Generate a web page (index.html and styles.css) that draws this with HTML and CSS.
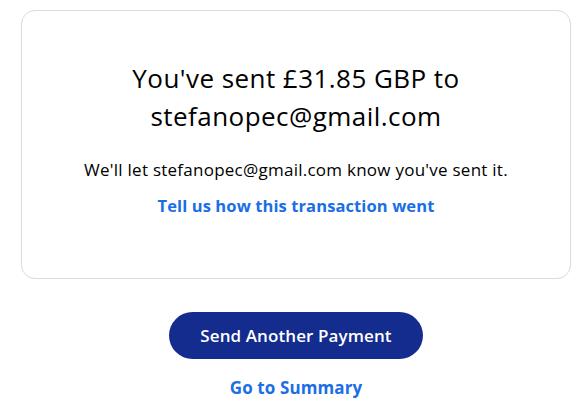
FILE: index.html
```html
<!DOCTYPE html>
<html>
<head>
<meta charset="utf-8">
<link rel="stylesheet" href="styles.css">
</head>
<body>
<main class="page">
  <section class="card">
    <h1 class="title">You've sent £31.85 GBP to<br>stefanopec@gmail.com</h1>
    <p class="note">We'll let stefanopec@gmail.com know you've sent it.</p>
    <a class="link feedback" href="#">Tell us how this transaction went</a>
  </section>
  <div class="actions">
    <button class="primary">Send Another Payment</button>
    <a class="link summary" href="#">Go to Summary</a>
  </div>
</main>
</body>
</html>
```
FILE: styles.css
```css
html, body {
  margin: 0;
  padding: 0;
  background: #fff;
}
body {
  font-family: "Open Sans", "Noto Sans", sans-serif;
  color: #000;
}
.page {
  padding: 10px 16px 0 21px;
}
.card {
  border: 1px solid #dcdcd6;
  border-radius: 14px;
  box-sizing: border-box;
  height: 269px;
  padding-top: 48px;
  display: flex;
  flex-direction: column;
  align-items: center;
  text-align: center;
}
.title {
  margin: 0;
  font-size: 26px;
  line-height: 38px;
  font-weight: 400;
  letter-spacing: 0.45px;
  color: #000;
}
.note {
  margin: 23px 0 0;
  font-size: 17px;
  line-height: 24px;
  letter-spacing: 0.25px;
  color: #000;
}
.link {
  color: #1a6ee6;
  font-weight: 700;
  text-decoration: none;
  font-size: 16.5px;
  line-height: 24px;
  letter-spacing: 0.1px;
}
.feedback {
  margin-top: 12px;
}
.actions {
  display: flex;
  flex-direction: column;
  align-items: center;
  padding-top: 33px;
}
.primary {
  width: 254px;
  height: 47px;
  border: 0;
  border-radius: 24px;
  background: #142c8e;
  color: #fff;
  font-family: inherit;
  font-size: 17px;
  font-weight: 600;
  letter-spacing: 0.1px;
}
.summary {
  margin-top: 17px;
  font-size: 17px;
}
```
